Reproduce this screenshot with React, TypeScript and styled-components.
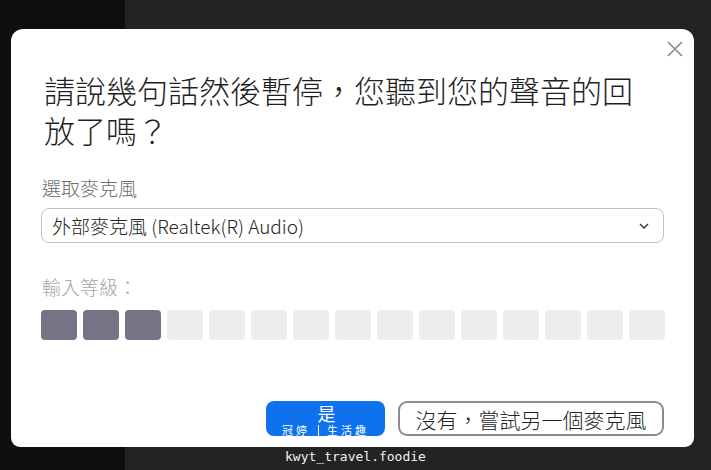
import React from 'react';
import styled, { createGlobalStyle } from 'styled-components';

const GlobalStyle = createGlobalStyle`
    html, body {
        margin: 0;
        padding: 0;
        width: 711px;
        height: 470px;
        overflow: hidden;
        background: #232323;
    }
    * {
        box-sizing: border-box;
    }
`

const LEVELS = 15
const ACTIVE_LEVELS = 3

const Page = styled.div`
    width: 711px;
    height: 470px;
    padding-top: 29px;
    background: linear-gradient(to right, #0f0f0f 125px, #232323 125px);
    font-family: "Noto Sans CJK TC", "Noto Sans", sans-serif;
`

const Dialog = styled.div`
    margin-left: 11px;
    width: 683px;
    height: 418px;
    background: #ffffff;
    border-radius: 12px 12px 9px 9px;
    padding: 0 30px 11px 30px;
    display: flex;
    flex-direction: column;
`

const CloseRow = styled.div`
    height: 41px;
    padding-top: 8px;
    margin-right: -23px;
    display: flex;
    justify-content: flex-end;
`

const CloseButton = styled.button`
    width: 24px;
    height: 24px;
    padding: 0;
    border: none;
    background: none;
    display: flex;
    align-items: center;
    justify-content: center;
`

const Title = styled.h1`
    margin: 0 0 0 3px;
    max-width: 600px;
    font-size: 31px;
    line-height: 40px;
    font-weight: 300;
    color: #1f1f1f;
`

const FieldLabel = styled.div<{ $muted?: boolean }>`
    margin-top: ${p => p.$muted ? "30px" : "24px"};
    margin-left: 1px;
    font-size: 19px;
    line-height: 28px;
    font-weight: 300;
    color: ${p => p.$muted ? "#a6a6a6" : "#6b6b6b"};
`

const Select = styled.div`
    margin-top: 6px;
    height: 35px;
    border: 1px solid #c4c4c8;
    border-radius: 8px;
    padding: 0 14px 0 10px;
    display: flex;
    align-items: center;
    justify-content: space-between;
    font-size: 19px;
    font-weight: 300;
    color: #232323;
`

const Meter = styled.div`
    margin-top: 9px;
    display: grid;
    grid-template-columns: repeat(${LEVELS}, 36px);
    gap: 6px;
`

const Level = styled.div<{ $on: boolean }>`
    height: 30px;
    border-radius: 4px;
    background: ${p => p.$on ? "#747486" : "#ededf0"};
`

const Actions = styled.div`
    margin-top: auto;
    display: flex;
    justify-content: flex-end;
    gap: 13px;
`

const PrimaryButton = styled.button`
    width: 119px;
    height: 35px;
    border: none;
    border-radius: 8px;
    background: #0e72ed;
    color: #ffffff;
    font-family: inherit;
    display: flex;
    flex-direction: column;
    align-items: center;
    padding: 3px 0 0 0;
`

const YesText = styled.span`
    font-size: 18px;
    line-height: 18px;
    height: 18px;
    margin: 0 0 2px 2px;
`

const MarkRow = styled.span`
    display: flex;
    align-items: flex-end;
    gap: 8px;
    font-size: 11px;
    line-height: 12px;
    letter-spacing: 3px;
`

const MarkLine = styled.span`
    width: 1px;
    height: 11px;
    background: #ffffff;
`

const SecondaryButton = styled.button`
    width: 266px;
    height: 35px;
    border: 2px solid #8c8c8c;
    border-radius: 9px;
    background: #ffffff;
    color: #232323;
    font-family: inherit;
    font-size: 21px;
    line-height: 28px;
    font-weight: 300;
    padding: 0;
`

const Watermark = styled.div`
    height: 20px;
    line-height: 20px;
    text-align: center;
    color: #f2f2f2;
    font-family: "DejaVu Sans Mono", monospace;
    font-size: 13px;
`

export default function App() {
    return (
        <Page>
            <GlobalStyle />
            <Dialog>
                <CloseRow>
                    <CloseButton aria-label="close">
                        <svg width="16" height="16" viewBox="0 0 16 16">
                            <path d="M1 1 L15 15 M15 1 L1 15" stroke="#8a8a8a" strokeWidth="1.6" fill="none" />
                        </svg>
                    </CloseButton>
                </CloseRow>
                <Title>請說幾句話然後暫停，您聽到您的聲音的回放了嗎？</Title>
                <FieldLabel>選取麥克風</FieldLabel>
                <Select>
                    <span>外部麥克風 (Realtek(R) Audio)</span>
                    <svg width="10" height="6" viewBox="0 0 10 6">
                        <polyline points="1,1 5,5 9,1" stroke="#333" strokeWidth="1.4" fill="none" />
                    </svg>
                </Select>
                <FieldLabel $muted>輸入等級：</FieldLabel>
                <Meter>
                    {Array.from({ length: LEVELS }, (_, idx) => (
                        <Level key={idx} $on={idx < ACTIVE_LEVELS} />
                    ))}
                </Meter>
                <Actions>
                    <PrimaryButton>
                        <YesText>是</YesText>
                        <MarkRow>
                            <span>冠婷</span>
                            <MarkLine />
                            <span>生活趣</span>
                        </MarkRow>
                    </PrimaryButton>
                    <SecondaryButton>沒有，嘗試另一個麥克風</SecondaryButton>
                </Actions>
            </Dialog>
            <Watermark>kwyt_travel.foodie</Watermark>
        </Page>
    )
}
